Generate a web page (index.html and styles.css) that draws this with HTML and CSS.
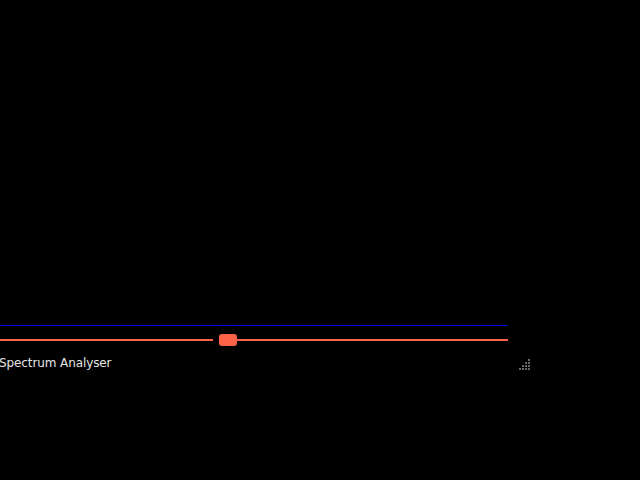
FILE: index.html
```html
<!DOCTYPE html>
<html>
<head>
<meta charset="utf-8">
<link rel="stylesheet" href="styles.css">
</head>
<body>
<div class="app">
  <div class="plot"></div>
  <div class="slider">
    <div class="track track-left"></div>
    <div class="handle"></div>
    <div class="track track-right"></div>
  </div>
  <div class="footer">
    <span class="title">Spectrum Analyser</span>
    <svg class="grip" width="12" height="12" viewBox="0 0 12 12">
      <g fill="#666">
        <rect x="9" y="0" width="2" height="2"/>
        <rect x="6" y="3" width="2" height="2"/><rect x="9" y="3" width="2" height="2"/>
        <rect x="3" y="6" width="2" height="2"/><rect x="6" y="6" width="2" height="2"/><rect x="9" y="6" width="2" height="2"/>
        <rect x="0" y="9" width="2" height="2"/><rect x="3" y="9" width="2" height="2"/><rect x="6" y="9" width="2" height="2"/><rect x="9" y="9" width="2" height="2"/>
      </g>
    </svg>
  </div>
</div>
</body>
</html>
```
FILE: styles.css
```css
html, body {
  margin: 0;
  padding: 0;
  background: #000;
  width: 640px;
  height: 480px;
  overflow: hidden;
}
.app {
  width: 532px;
  display: flex;
  flex-direction: column;
}
.plot {
  height: 325px;
  width: 507px;
  border-bottom: 1px solid #0000e6;
}
.slider {
  width: 508px;
  height: 12px;
  padding-top: 8px;
  display: flex;
  align-items: center;
}
.track {
  height: 2px;
  background: #ff6347;
}
.track-left {
  width: 213px;
  margin-right: 6px;
}
.track-right {
  flex: 1;
}
.handle {
  width: 18px;
  height: 12px;
  border-radius: 3px;
  background: #ff6347;
}
.footer {
  display: flex;
  justify-content: space-between;
  align-items: flex-start;
  margin-top: 10px;
}
.title {
  font-family: "DejaVu Sans", sans-serif;
  font-size: 12px;
  line-height: 14px;
  letter-spacing: -0.1px;
  margin-left: -1px;
  color: #e6e6e6;
}
.grip {
  display: block;
  margin-top: 3px;
  margin-right: 1px;
}
```
